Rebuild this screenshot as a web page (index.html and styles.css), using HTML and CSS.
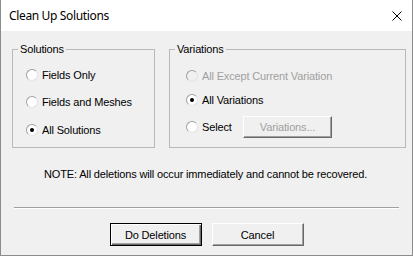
FILE: index.html
```html
<!DOCTYPE html>
<html>
<head>
<meta charset="utf-8">
<link rel="stylesheet" href="styles.css">
</head>
<body>
<div class="window">
  <div class="titlebar">
    <span class="title">Clean Up Solutions</span>
    <svg class="close" width="10" height="10" viewBox="0 0 10 10"><path d="M0.5 0.5 L9.5 9.5 M9.5 0.5 L0.5 9.5" stroke="#000" stroke-width="1" fill="none"/></svg>
  </div>
  <div class="content">
    <div class="groups">
      <fieldset class="group group-solutions">
        <legend>Solutions</legend>
        <div class="opt opt-s1"><span class="radio"></span><span>Fields Only</span></div>
        <div class="opt opt-s2"><span class="radio"></span><span>Fields and Meshes</span></div>
        <div class="opt opt-s3"><span class="radio checked"></span><span>All Solutions</span></div>
      </fieldset>
      <fieldset class="group group-variations">
        <legend>Variations</legend>
        <div class="opt opt-v1 disabled"><span class="radio"></span><span>All Except Current Variation</span></div>
        <div class="opt opt-v2"><span class="radio checked"></span><span>All Variations</span></div>
        <div class="opt opt-v3"><span class="radio"></span><span class="select-label">Select</span><button class="btn btn-disabled">Variations...</button></div>
      </fieldset>
    </div>
    <p class="note">NOTE: All deletions will occur immediately and cannot be recovered.</p>
    <div class="separator"></div>
    <div class="buttons">
      <button class="btn btn-default">Do Deletions</button>
      <button class="btn">Cancel</button>
    </div>
  </div>
</div>
</body>
</html>
```
FILE: styles.css
```css
* { box-sizing: border-box; }
html, body { margin: 0; padding: 0; background: #f0f0f0; }
.window {
  width: 413px;
  height: 256px;
  border: 1px solid #8c8c8c;
  border-top: none;
  background: #f0f0f0;
  display: flex;
  flex-direction: column;
  font-family: "Liberation Sans", Arial, sans-serif;
  font-size: 11px;
  letter-spacing: -0.15px;
  color: #000;
}
.titlebar {
  height: 31px;
  background: #fff;
  display: flex;
  align-items: center;
  justify-content: space-between;
  padding: 0 10px 0 8px;
  flex-shrink: 0;
  letter-spacing: 0;
}
.title {
  font-family: "Noto Sans", "Liberation Sans", sans-serif;
  font-size: 12px;
  letter-spacing: -0.35px;
  margin-top: -1px;
}
.close { display: block; }
.content {
  flex: 1;
  padding: 12px 6px 0 11px;
  display: flex;
  flex-direction: column;
}
.groups { display: flex; gap: 14px; }
.group {
  margin: 0;
  padding: 0;
  border: 1px solid #b9b9b9;
  min-width: 0;
  display: flex;
  flex-direction: column;
}
.group legend {
  padding: 0 2px;
  margin-left: 5px;
  line-height: 13px;
}
.group-solutions { width: 143px; height: 105px; }
.group-variations { width: 237px; height: 105px; }
.opt {
  display: flex;
  align-items: center;
  height: 14px;
  margin-left: 13px;
  white-space: nowrap;
}
.group-variations .opt { margin-left: 16px; }
.opt-s1 { margin-top: 12px; }
.opt-s2 { margin-top: 13px; }
.opt-s3 { margin-top: 14px; }
.opt-v1 { margin-top: 13px; }
.opt-v2 { margin-top: 10px; }
.opt-v3 { margin-top: 13px; }
.radio {
  width: 12px;
  height: 12px;
  border-radius: 50%;
  background: #fff;
  border: 1px solid;
  border-color: #a0a0a0 #e3e3e3 #e3e3e3 #a0a0a0;
  margin-right: 4px;
  display: flex;
  align-items: center;
  justify-content: center;
  flex-shrink: 0;
}
.radio.checked::after {
  content: "";
  width: 4px;
  height: 4px;
  border-radius: 50%;
  background: #000;
}
.disabled { color: #a0a0a0; }
.disabled .radio { background: #f0f0f0; }
.select-label { width: 41px; }
.btn {
  font-family: "Liberation Sans", Arial, sans-serif;
  font-size: 11px;
  letter-spacing: -0.15px;
  color: #000;
  background: #f0f0f0;
  border: 1px solid;
  border-color: #fff #696969 #696969 #fff;
  box-shadow: inset -1px -1px #a0a0a0;
  padding: 0;
  margin: 0;
  width: 92px;
  height: 23px;
}
.btn-disabled {
  width: 89px;
  height: 22px;
  color: #a0a0a0;
}
.btn-default {
  border: 1px solid #000;
  box-shadow: inset 1px 1px #fff, inset -1px -1px #696969, inset -2px -2px #a0a0a0;
}
.note {
  margin: 19px 0 0 32px;
  line-height: 14px;
}
.separator {
  margin: 26px 0 0 2px;
  width: 385px;
  height: 2px;
  border-top: 1px solid #a0a0a0;
  border-bottom: 1px solid #fff;
}
.buttons {
  margin-top: 14px;
  display: flex;
  gap: 10px;
  justify-content: center;
  padding-right: 5px;
}
```
